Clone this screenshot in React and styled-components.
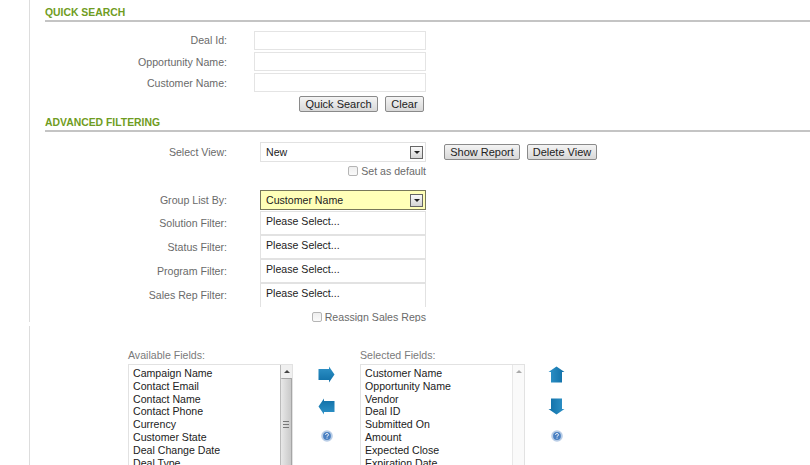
import React from "react";
import styled, { createGlobalStyle } from "styled-components";

const GlobalStyle = createGlobalStyle`
  html, body {
    margin: 0;
    padding: 0;
    height: 465px;
    overflow: hidden;
    background: #fff;
    font-family: "Liberation Sans", Arial, sans-serif;
    font-size: 11px;
    color: #222;
  }
`;

const TopPanel = styled.div`
  margin-left: 29px;
  height: 322px;
  border-left: 1px solid #ddd;
  padding-left: 15px;
  box-sizing: border-box;
  overflow: hidden;
`;

const BottomPanel = styled.div`
  margin: 4px 0 0 29px;
  height: 139px;
  border-left: 1px solid #ddd;
  padding: 23px 0 0 98px;
  box-sizing: border-box;
  display: flex;
  overflow: hidden;
`;

const SectionTitle = styled.div`
  height: ${(p) => p.$height}px;
  margin-bottom: ${(p) => p.$bottom || 0}px;
  box-sizing: border-box;
  border-bottom: 2px solid #c4c4c4;
  color: #6f9c22;
  font-size: 10.4px;
  font-weight: bold;
  line-height: 11px;
  padding-top: ${(p) => p.$pad}px;
  text-transform: uppercase;
`;

const Row = styled.div`
  display: flex;
  align-items: ${(p) => p.$align || "center"};
  height: ${(p) => p.$height}px;
  margin-top: ${(p) => p.$top || 0}px;
`;

const Label = styled.label`
  width: 182px;
  flex: none;
  text-align: right;
  color: #6a6a6a;
  font-size: 10.6px;
  padding-top: ${(p) => p.$pad || 0}px;
  box-sizing: border-box;
`;

const TextBox = styled.input`
  width: 172px;
  height: 19px;
  margin: 0 0 0 27px;
  padding: 0;
  box-sizing: border-box;
  border: 1px solid #e4e4e4;
  background: #fff;
`;

const ButtonRow = styled.div`
  display: flex;
  gap: ${(p) => p.$gap}px;
  height: 16px;
  margin: ${(p) => p.$margin};
`;

const Button = styled.button`
  width: ${(p) => p.$width}px;
  height: 16px;
  padding: 0;
  box-sizing: border-box;
  border: 1px solid #8a8a8a;
  border-radius: 2px;
  background: linear-gradient(#f4f4f4, #d8d8d8);
  color: #222;
  font-family: inherit;
  font-size: 11px;
  line-height: 14px;
`;

const SelectBox = styled.div`
  width: 166px;
  height: ${(p) => p.$height}px;
  margin-left: 33px;
  flex: none;
  box-sizing: border-box;
  display: flex;
  align-items: center;
  justify-content: space-between;
  padding: 0 2px 0 5px;
  border: 1px solid ${(p) => (p.$highlight ? "#77775a" : "#e2e2e2")};
  background: ${(p) => (p.$highlight ? "#ffffb8" : "#fff")};
  font-size: 10.6px;
  color: #222;
`;

const SelectArrow = styled.span`
  width: 13px;
  height: 13px;
  box-sizing: border-box;
  border: 1px solid #666;
  background: linear-gradient(#fafafa, #d4d4d4);
  display: flex;
  align-items: center;
  justify-content: center;
  &::after {
    content: "";
    border-left: 3px solid transparent;
    border-right: 3px solid transparent;
    border-top: 3px solid #222;
  }
`;

const CheckRow = styled.label`
  width: 381px;
  height: ${(p) => p.$height}px;
  margin-top: ${(p) => p.$top}px;
  display: flex;
  align-items: center;
  justify-content: flex-end;
  gap: 3px;
  color: #6a6a6a;
  font-size: 10.6px;
`;

const Check = styled.span`
  width: 10px;
  height: 10px;
  box-sizing: border-box;
  border: 1px solid #b5b5b5;
  border-radius: 2px;
  background: linear-gradient(#eee, #fafafa);
`;

const FilterBox = styled.div`
  width: 166px;
  height: ${(p) => p.$height}px;
  margin-left: 33px;
  flex: none;
  box-sizing: border-box;
  padding: 3px 0 0 5px;
  border: 1px solid #e2e2e2;
  border-bottom: ${(p) => (p.$open ? "none" : "1px solid #e2e2e2")};
  font-size: 10.6px;
  line-height: 13px;
  color: #222;
`;

const FilterList = styled.div`
  margin-top: 1px;
`;

const QuickList = styled.div`
  margin-top: 7px;
`;

const FieldColumn = styled.div`
  width: 165px;
  flex: none;
`;

const FieldTitle = styled.div`
  height: 15px;
  color: #7a7a7a;
  font-size: 10.6px;
  line-height: 12px;
`;

const ListBox = styled.div`
  height: 120px;
  box-sizing: border-box;
  border: 1px solid #e2e2e2;
  border-bottom: none;
  display: flex;
  overflow: hidden;
`;

const Items = styled.div`
  flex: 1;
  padding: 2px 0 0 4px;
  font-size: 10.6px;
  line-height: 12.8px;
  color: #222;
  white-space: nowrap;
`;

const ScrollBar = styled.div`
  width: 12px;
  flex: none;
  box-sizing: border-box;
  border-left: 1px solid ${(p) => (p.$disabled ? "#e8e8e8" : "#bbb")};
  background: ${(p) => (p.$disabled ? "#fafafa" : "#f0f0f0")};
  display: flex;
  flex-direction: column;
  align-items: center;
`;

const ScrollUp = styled.span`
  height: 13px;
  flex: none;
  display: flex;
  align-items: center;
  &::after {
    content: "";
    border-left: 3px solid transparent;
    border-right: 3px solid transparent;
    border-bottom: 3px solid ${(p) => (p.$disabled ? "#aaa" : "#444")};
  }
`;

const ScrollThumb = styled.div`
  width: 100%;
  flex: 1;
  box-sizing: border-box;
  border: 1px solid #a5a5a5;
  border-left: none;
  border-radius: 1px;
  background: linear-gradient(90deg, #e8e8e8, #c9c9c9);
  display: flex;
  justify-content: center;
  padding-top: 42px;
  &::after {
    content: "";
    width: 6px;
    height: 5px;
    border-top: 1px solid #777;
    border-bottom: 1px solid #777;
    background: linear-gradient(#777, #777) center / 100% 1px no-repeat;
  }
`;

const IconColumn = styled.div`
  width: ${(p) => p.$width}px;
  flex: none;
  padding-top: 17px;
  box-sizing: border-box;
  display: flex;
  flex-direction: column;
  align-items: center;
  gap: 15px;
`;

const IconSlot = styled.span`
  display: flex;
  height: ${(p) => p.$height}px;
  align-items: center;
  justify-content: center;
`;

const ArrowIcon = ({ dir, id }) => {
  const rotate = { right: 0, down: 90, left: 180, up: 270 }[dir];
  return (
    <svg width="17" height="17" viewBox="0 0 17 17">
      <defs>
        <linearGradient id={id} x1="0" y1="0" x2="0" y2="1">
          <stop offset="0" stopColor="#2f93c8" />
          <stop offset="1" stopColor="#0f6ea6" />
        </linearGradient>
      </defs>
      <path
        d="M.5 3H11V.5l5.500 8-5.500 8V14H.5z"
        fill={`url(#${id})`}
        transform={`rotate(${rotate} 8.500 8.500)`}
      />
    </svg>
  );
};

const HelpIcon = () => (
  <svg width="12" height="12" viewBox="0 0 12 12">
    <circle cx="6" cy="6" r="5.800" fill="#b9cde6" />
    <circle cx="6" cy="6" r="3.900" fill="#4a80c2" />
    <path
      d="M4.600 4.800a1.400 1.300 0 1 1 2.100 1.100c-.5.300-.7.500-.7 1"
      fill="none"
      stroke="#fff"
      strokeWidth="1"
    />
    <rect x="5.500" y="7.600" width="1" height="1" fill="#fff" />
  </svg>
);

const availableFields = [
  "Campaign Name",
  "Contact Email",
  "Contact Name",
  "Contact Phone",
  "Currency",
  "Customer State",
  "Deal Change Date",
  "Deal Type",
];

const selectedFields = [
  "Customer Name",
  "Opportunity Name",
  "Vendor",
  "Deal ID",
  "Submitted On",
  "Amount",
  "Expected Close",
  "Expiration Date",
];

const quickFields = [
  { label: "Deal Id:", height: 22 },
  { label: "Opportunity Name:", height: 21 },
  { label: "Customer Name:", height: 21 },
];

const filters = [
  { label: "Solution Filter:", height: 24 },
  { label: "Status Filter:", height: 24 },
  { label: "Program Filter:", height: 24 },
  { label: "Sales Rep Filter:", height: 24, open: true },
];

export default function App() {
  return (
    <>
      <GlobalStyle />
      <TopPanel>
        <SectionTitle $height={22} $pad={7}>Quick Search</SectionTitle>
        <QuickList>
          {quickFields.map((f) => (
            <Row key={f.label} $height={f.height}>
              <Label>{f.label}</Label>
              <TextBox type="text" />
            </Row>
          ))}
        </QuickList>
        <ButtonRow $gap={7} $margin="3px 0 0 254px">
          <Button $width={79}>Quick Search</Button>
          <Button $width={39}>Clear</Button>
        </ButtonRow>
        <SectionTitle $height={20} $pad={5}>Advanced Filtering</SectionTitle>
        <Row $height={20} $top={10}>
          <Label>Select View:</Label>
          <SelectBox $height={20}>
            New
            <SelectArrow />
          </SelectBox>
          <ButtonRow $gap={7} $margin="0 0 0 18px">
            <Button $width={76}>Show Report</Button>
            <Button $width={70}>Delete View</Button>
          </ButtonRow>
        </Row>
        <CheckRow $height={18} $top={0}>
          <Check />
          Set as default
        </CheckRow>
        <Row $height={20} $top={10}>
          <Label>Group List By:</Label>
          <SelectBox $height={20} $highlight>
            Customer Name
            <SelectArrow />
          </SelectBox>
        </Row>
        <FilterList>
          {filters.map((f) => (
            <Row key={f.label} $height={f.height} $align="flex-start">
              <Label $pad={6}>{f.label}</Label>
              <FilterBox $height={f.height} $open={f.open}>Please Select...</FilterBox>
            </Row>
          ))}
        </FilterList>
        <CheckRow $height={18} $top={1}>
          <Check />
          Reassign Sales Reps
        </CheckRow>
      </TopPanel>
      <BottomPanel>
        <FieldColumn>
          <FieldTitle>Available Fields:</FieldTitle>
          <ListBox>
            <Items>
              {availableFields.map((f) => (
                <div key={f}>{f}</div>
              ))}
            </Items>
            <ScrollBar>
              <ScrollUp />
              <ScrollThumb />
            </ScrollBar>
          </ListBox>
        </FieldColumn>
        <IconColumn $width={67}>
          <IconSlot $height={17}><ArrowIcon dir="right" id="arrowRight" /></IconSlot>
          <IconSlot $height={17}><ArrowIcon dir="left" id="arrowLeft" /></IconSlot>
          <IconSlot $height={12}><HelpIcon /></IconSlot>
        </IconColumn>
        <FieldColumn>
          <FieldTitle>Selected Fields:</FieldTitle>
          <ListBox>
            <Items>
              {selectedFields.map((f) => (
                <div key={f}>{f}</div>
              ))}
            </Items>
            <ScrollBar $disabled>
              <ScrollUp $disabled />
            </ScrollBar>
          </ListBox>
        </FieldColumn>
        <IconColumn $width={63}>
          <IconSlot $height={17}><ArrowIcon dir="up" id="arrowUp" /></IconSlot>
          <IconSlot $height={17}><ArrowIcon dir="down" id="arrowDown" /></IconSlot>
          <IconSlot $height={12}><HelpIcon /></IconSlot>
        </IconColumn>
      </BottomPanel>
    </>
  );
}
